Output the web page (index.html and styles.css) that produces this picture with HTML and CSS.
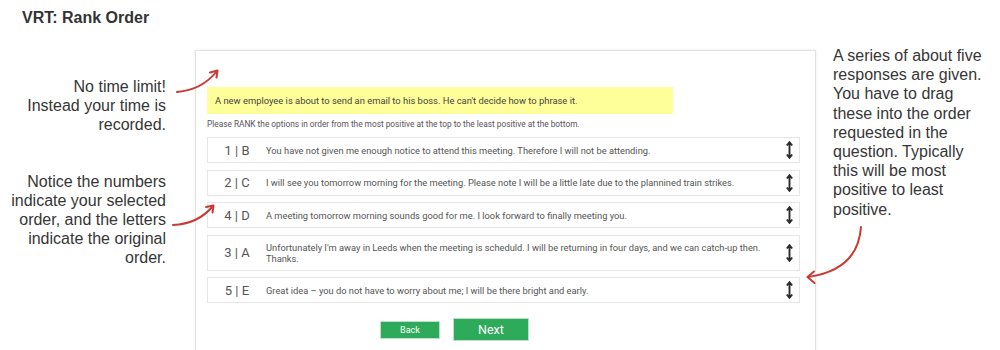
FILE: index.html
```html
<!DOCTYPE html>
<html lang="en">
<head>
    <meta charset="UTF-8">
    <title>VRT: Rank Order</title>
    <link rel="stylesheet" href="styles.css">
</head>
<body>
    <header class="page-title">VRT: Rank Order</header>
    <main class="layout">
        <aside class="notes-left">
            <p class="note note-time">No time limit!<br>Instead your time is<br>recorded.</p>
            <p class="note note-order">Notice the numbers indicate your selected order, and the letters indicate the original order.</p>
        </aside>
        <section class="panel">
            <div class="scenario">A new employee is about to send an email to his boss. He can't decide how to phrase it.</div>
            <p class="instruction">Please RANK the options in order from the most positive at the top to the least positive at the bottom.</p>
            <ul class="options">
                <li class="option">
                    <span class="rank">1 | B</span>
                    <span class="answer">You have not given me enough notice to attend this meeting. Therefore I will not be attending.</span>
                    <svg class="drag" width="7" height="18" viewBox="0 0 7 18"><path d="M3.5 2v14M0.8 4.5L3.5 1.2 6.2 4.5M0.8 13.5L3.5 16.8 6.2 13.5" fill="none" stroke="#2b2b2b" stroke-width="1.9"/></svg>
                </li>
                <li class="option">
                    <span class="rank">2 | C</span>
                    <span class="answer">I will see you tomorrow morning for the meeting. Please note I will be a little late due to the plannined train strikes.</span>
                    <svg class="drag" width="7" height="18" viewBox="0 0 7 18"><path d="M3.5 2v14M0.8 4.5L3.5 1.2 6.2 4.5M0.8 13.5L3.5 16.8 6.2 13.5" fill="none" stroke="#2b2b2b" stroke-width="1.9"/></svg>
                </li>
                <li class="option">
                    <span class="rank">4 | D</span>
                    <span class="answer">A meeting tomorrow morning sounds good for me. I look forward to finally meeting you.</span>
                    <svg class="drag" width="7" height="18" viewBox="0 0 7 18"><path d="M3.5 2v14M0.8 4.5L3.5 1.2 6.2 4.5M0.8 13.5L3.5 16.8 6.2 13.5" fill="none" stroke="#2b2b2b" stroke-width="1.9"/></svg>
                </li>
                <li class="option option-tall">
                    <span class="rank">3 | A</span>
                    <span class="answer">Unfortunately I'm away in Leeds when the meeting is scheduld. I will be returning in four days, and we can catch-up then.<br>Thanks.</span>
                    <svg class="drag" width="7" height="18" viewBox="0 0 7 18"><path d="M3.5 2v14M0.8 4.5L3.5 1.2 6.2 4.5M0.8 13.5L3.5 16.8 6.2 13.5" fill="none" stroke="#2b2b2b" stroke-width="1.9"/></svg>
                </li>
                <li class="option">
                    <span class="rank">5 | E</span>
                    <span class="answer">Great idea &ndash; you do not have to worry about me; I will be there bright and early.</span>
                    <svg class="drag" width="7" height="18" viewBox="0 0 7 18"><path d="M3.5 2v14M0.8 4.5L3.5 1.2 6.2 4.5M0.8 13.5L3.5 16.8 6.2 13.5" fill="none" stroke="#2b2b2b" stroke-width="1.9"/></svg>
                </li>
            </ul>
            <div class="actions">
                <button class="btn btn-back">Back</button>
                <button class="btn btn-next">Next</button>
            </div>
        </section>
        <aside class="notes-right">
            <p class="note">A series of about five responses are given. You have to drag these into the order requested in the question. Typically this will be most positive to least positive.</p>
        </aside>
    </main>

    <!-- callout arrows drawn over the page -->
    <svg class="arrows" width="1000" height="350" viewBox="0 0 1000 350">
        <g fill="none" stroke="#c93a34" stroke-width="2" stroke-linecap="round" stroke-linejoin="round">
            <path d="M177 92 Q202 90 217 71"/>
            <path d="M210 72.5 L217.5 70.5 L216.5 77.5"/>
            <path d="M173 225 Q198 224 213 206"/>
            <path d="M206 207 L213.5 205.5 L212.5 212.5"/>
            <path d="M861 227 Q858 270 808 277"/>
            <path d="M814 271.5 L807.5 277 L814.5 283"/>
        </g>
    </svg>
</body>
</html>
```

FILE: styles.css
```css
body {
    margin: 0;
    background: #fff;
    font-family: Roboto, "Liberation Sans", sans-serif;
    color: #333;
    position: relative;
    width: 1000px;
    height: 350px;
    overflow: hidden;
}
.page-title {
    padding: 9px 0 0 22px;
    font-family: "Liberation Sans", Arial, sans-serif;
    font-weight: bold;
    font-size: 16px;
    line-height: 18px;
    color: #333;
}
.layout {
    display: flex;
    align-items: flex-start;
    margin-top: 19px;
}
.note {
    margin: 0;
    font-family: "Liberation Sans", Arial, sans-serif;
    font-size: 16px;
    line-height: 19.2px;
    color: #363636;
}
.notes-left {
    width: 166px;
    padding-right: 29px;
    margin-top: 31px;
    text-align: right;
}
.note-order {
    margin-top: 37px;
}
.panel {
    width: 593px;
    margin-top: 4px;
    height: 270px;
    padding: 36px 15px 0 11px;
    border: 1px solid #e2e2e2;
    box-shadow: 0 0 3px rgba(0, 0, 0, 0.08);
}
.scenario {
    width: 458px;
    height: 27px;
    padding-left: 8px;
    display: flex;
    align-items: center;
    background: #ffff99;
    font-size: 9.4px;
    color: #444;
}
.instruction {
    margin: 5px 0 8px;
    font-size: 8.3px;
    line-height: 10px;
    color: #555;
}
.options {
    list-style: none;
    margin: 0;
    padding: 0;
    display: flex;
    flex-direction: column;
    gap: 6.5px;
}
.option {
    display: flex;
    align-items: center;
    min-height: 24px;
    border: 1px solid #e6e6e6;
    padding-right: 6px;
}
.option-tall {
    padding-top: 5px;
    padding-bottom: 5px;
}
.rank {
    width: 58px;
    flex-shrink: 0;
    text-align: center;
    font-size: 13px;
    color: #555;
}
.answer {
    flex: 1;
    font-size: 9.3px;
    line-height: 11px;
    color: #555;
}
.drag {
    flex-shrink: 0;
}
.actions {
    display: flex;
    align-items: center;
    gap: 13px;
    margin-top: 15px;
    padding-left: 173px;
}
.btn {
    border: 1px solid #b9e2c6;
    background: #2eaa5b;
    color: #fff;
    font-family: Roboto, "Liberation Sans", sans-serif;
    padding: 0;
    cursor: pointer;
}
.btn-back {
    width: 60px;
    height: 18px;
    font-size: 9px;
}
.btn-next {
    width: 76px;
    height: 23px;
    font-size: 12.5px;
}
.notes-right {
    width: 155px;
    padding-left: 17px;
}
.arrows {
    position: absolute;
    left: 0;
    top: 0;
    pointer-events: none;
}
```
